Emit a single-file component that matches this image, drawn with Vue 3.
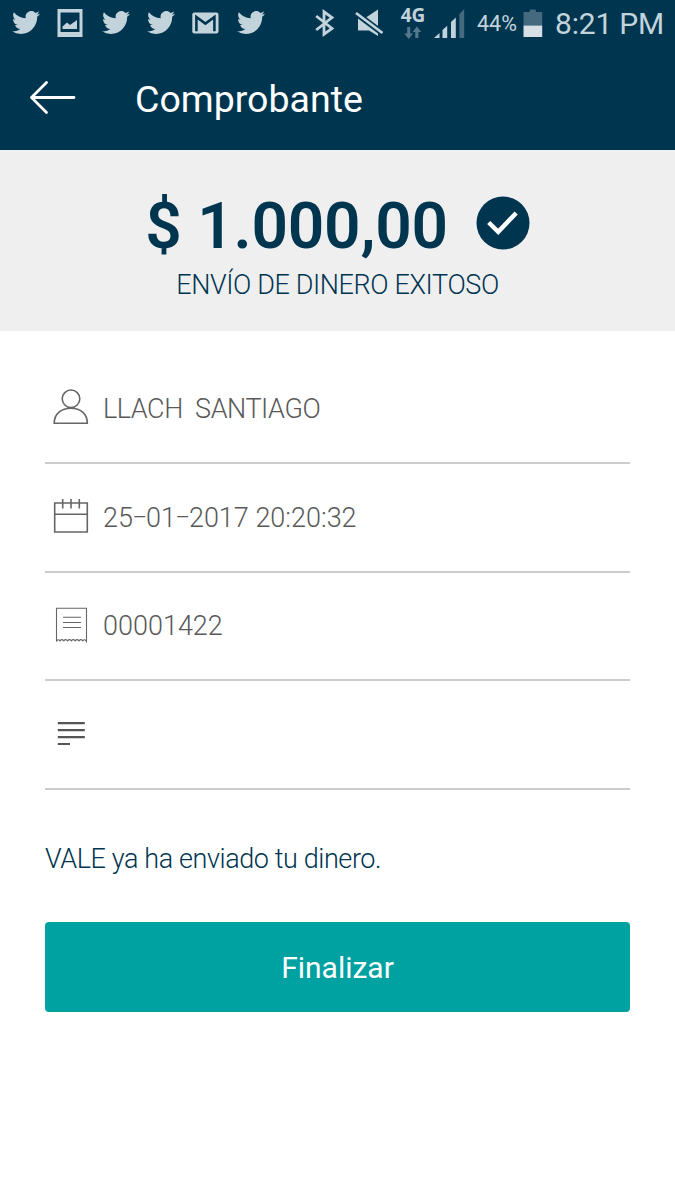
<script setup>
import { ref } from 'vue'

// Notification icons on the left of the status bar
const notifications = ['bird', 'picture', 'bird', 'bird', 'mail', 'bird']

// Receipt rows
const rows = [
  { id: 'person', parts: ['LLACH  SANTIAGO'] },
  { id: 'date', parts: ['25', '01', '2017 20:20:32'] },
  { id: 'receipt', parts: ['00001422'] },
  { id: 'note', parts: [] }
]

const finished = ref(false)

function finish() {
  finished.value = true
}
</script>

<template>
  <div class="page">
    <!-- Status bar -->
    <div class="status-bar">
      <div class="notifications">
        <div v-for="(name, i) in notifications" :key="i" class="notification">
          <svg v-if="name === 'bird'" width="28" height="23" viewBox="0 2.2 24 19.6" preserveAspectRatio="none">
            <path fill="currentColor" d="M23.953 4.57a10 10 0 01-2.825.775 4.958 4.958 0 002.163-2.723c-.951.555-2.005.959-3.127 1.184a4.92 4.92 0 00-8.384 4.482C7.69 8.095 4.067 6.13 1.64 3.162a4.822 4.822 0 00-.666 2.475c0 1.71.87 3.213 2.188 4.096a4.904 4.904 0 01-2.228-.616v.06a4.923 4.923 0 003.946 4.827 4.996 4.996 0 01-2.212.085 4.936 4.936 0 004.604 3.417 9.867 9.867 0 01-6.102 2.105c-.39 0-.779-.023-1.17-.067a13.995 13.995 0 007.557 2.209c9.053 0 13.998-7.496 13.998-13.985 0-.21 0-.42-.015-.63A9.935 9.935 0 0024 4.59z" />
          </svg>
          <svg v-else-if="name === 'picture'" class="picture" width="26" height="28" viewBox="0 0 26 28">
            <path fill="currentColor" fill-rule="evenodd" d="M0.5 0H25.5V28H0.5ZM3.5 3.5V23H22.5V3.5Z" />
            <path fill="currentColor" d="M5.5 20V17.5L10 13.5L13 16L20 11V20Z" />
          </svg>
          <svg v-else class="mail" width="27" height="22" viewBox="0 0 27 22">
            <rect x="0.3" y="0.5" width="26.2" height="21" rx="2" fill="currentColor" />
            <path class="mail-line" d="M4.4 19.2V5L13.4 11.6L22.4 5V19.2" />
          </svg>
        </div>
      </div>

      <div class="system">
        <svg class="bluetooth" width="20" height="28" viewBox="0 0 20 28">
          <path fill="none" stroke="currentColor" stroke-width="2.8" d="M1.2 7L17 19.5L9 25.2V2.8L17 8.5L1.2 21" />
        </svg>
        <svg class="mute" width="30" height="28" viewBox="0 0 30 28">
          <path fill="currentColor" d="M3 8.5H11L23 0.5V27L14 21.5H3Z" />
          <path class="mute-gap" d="M0 3.4L28.5 24.8" />
          <path fill="none" stroke="currentColor" stroke-width="2.8" d="M1 4L27.5 24" />
        </svg>
        <div class="network">
          <span class="network-name">4G</span>
          <svg width="18" height="14" viewBox="0 0 18 14">
            <path fill="currentColor" d="M3.2 1H6.2V7.5H9L4.7 13L0.3 7.5H3.2ZM11.3 12V6H8.5L12.9 0.5L17.3 6H14.4V12Z" />
          </svg>
        </div>
        <svg class="signal" width="32" height="31" viewBox="0 0 32 31">
          <path fill="currentColor" d="M0 30L5.5 25V30ZM8.5 22L13.2 17.8V30H8.5ZM17 14L21.8 9.5V30H17Z" />
          <path class="dim" d="M25.4 6L30.2 1V30H25.4Z" />
        </svg>
        <span class="percent">44%</span>
        <svg class="battery" width="20" height="29" viewBox="0 0 20 29">
          <path class="dim" d="M0.5 3H6.8V0.5H12.8V3H19.2V16.5H0.5Z" />
          <path class="charge" d="M0.5 16.5H19.2V28H0.5Z" />
        </svg>
        <span class="clock">8:21 PM</span>
      </div>
    </div>

    <!-- Header -->
    <header class="header">
      <svg class="back" width="48" height="36" viewBox="0 0 48 36">
        <path d="M17.5 3.5L2.5 18.5L17.5 33.5M2.5 18.5H45" />
      </svg>
      <h1 class="title">Comprobante</h1>
    </header>

    <!-- Amount -->
    <section class="summary">
      <div class="amount-line">
        <span class="amount">$ 1.000,00</span>
        <svg class="check" width="54" height="54" viewBox="0 0 54 54">
          <circle cx="27" cy="27" r="26.5" />
          <path d="M12.7 26.5L22.2 35.8L40.2 17" />
        </svg>
      </div>
      <div class="result">ENVÍO DE DINERO EXITOSO</div>
    </section>

    <!-- Details -->
    <main class="details">
      <div v-for="row in rows" :key="row.id" class="row">
        <svg v-if="row.id === 'person'" class="row-icon" width="36" height="36" viewBox="0 0 36 36">
          <circle cx="18" cy="9.8" r="8.8" />
          <path d="M1.2 34.2C1.2 24.5 8.5 19.2 18 19.2S34.3 24.5 34.3 34.2Z" />
        </svg>
        <svg v-else-if="row.id === 'date'" class="row-icon" width="36" height="36" viewBox="0 0 36 36">
          <path d="M1.7 5H34.3V34H1.7ZM1.7 16.3H34.3M9.7 1V10.5M18 1V10.5M26.3 1V10.5" />
        </svg>
        <svg v-else-if="row.id === 'receipt'" class="row-icon thin" width="36" height="36" viewBox="0 0 36 36">
          <path d="M3.5 34.5V1.3H33.5V34.5Q31.5 31.5 29.8 33.8Q27.8 31.5 26 33.8Q24 31.5 22.2 33.8Q20.2 31.5 18.4 33.8Q16.4 31.5 14.6 33.8Q12.6 31.5 10.8 33.8Q8.8 31.5 7 33.8Q5 31.5 3.5 34.5ZM10 10.2H28M10 15.5H28M10 20.5H28" />
        </svg>
        <svg v-else class="row-icon thick" width="36" height="36" viewBox="0 0 36 36">
          <path d="M4.8 7.2H31.8M4.8 14.2H31.8M4.8 21.2H31.8M4.8 28H17" />
        </svg>
        <span class="row-text" :class="row.id"><template v-for="(part, i) in row.parts" :key="i"><span v-if="i" class="dash">–</span>{{ part }}</template></span>
      </div>

      <p class="message">VALE ya ha enviado tu dinero.</p>
      <button class="finish" :disabled="finished" @click="finish">Finalizar</button>
    </main>
  </div>
</template>

<style>
body {
  margin: 0;
  background-color: #ffffff;
}
</style>

<style scoped>
.page {
  min-height: 100vh;
  background-color: #ffffff;
  font-family: Roboto, sans-serif;
  color: #003550;
}

svg {
  display: block;
  flex-shrink: 0;
}

/* Status bar */
.status-bar {
  display: flex;
  justify-content: space-between;
  height: 46px;
  padding: 0 11px 0 12px;
  box-sizing: border-box;
  background-color: #003550;
  color: #c3d3dc;
}

.notifications,
.system {
  display: flex;
  align-items: center;
}

.notifications {
  gap: 17px;
  height: 45px;
}

.notification {
  display: flex;
  justify-content: center;
  width: 28px;
}

.picture,
.mail {
  margin-right: 2px;
}

.mail-line {
  fill: none;
  stroke: #003550;
  stroke-width: 2.6;
}

.bluetooth {
  margin-right: 20px;
}

.mute {
  margin-right: 15px;
}

.mute-gap {
  fill: none;
  stroke: #003550;
  stroke-width: 6;
}

.network {
  display: flex;
  flex-direction: column;
  align-items: center;
  gap: 2px;
  width: 26px;
  margin-right: 8px;
  color: #55788b;
}

.network-name {
  font: 700 19px/17px "Open Sans", sans-serif;
  color: #c3d3dc;
}

.signal {
  margin-right: 11px;
}

.dim {
  fill: #45697e;
}

.percent {
  width: 41px;
  margin-right: 5px;
  font-size: 21.5px;
  white-space: nowrap;
}

.battery {
  margin-right: 12px;
}

.charge {
  fill: #d5dfe5;
}

.clock {
  width: 109px;
  font-size: 30px;
  letter-spacing: -0.2px;
  white-space: nowrap;
}

/* Header */
.header {
  display: flex;
  align-items: center;
  height: 104px;
  padding: 0 29px;
  box-sizing: border-box;
  background-color: #003550;
}

.back {
  margin: 0 58px 2px 0;
}

.back path {
  fill: none;
  stroke: #ffffff;
  stroke-width: 2.8;
  stroke-linecap: round;
  stroke-linejoin: round;
}

.title {
  margin: 0;
  padding-top: 1px;
  font-size: 37.5px;
  font-weight: 400;
  color: #ffffff;
}

/* Amount */
.summary {
  height: 181px;
  padding-top: 36px;
  box-sizing: border-box;
  background-color: #efefef;
  text-align: center;
}

.amount-line {
  display: flex;
  justify-content: center;
  align-items: center;
  gap: 28px;
  height: 76px;
}

.amount {
  padding-top: 5px;
  font-size: 64px;
  font-weight: 560;
  line-height: 76px;
  letter-spacing: -0.25px;
}

.check {
  margin-bottom: 2px;
}

.check circle {
  fill: #003550;
}

.check path {
  fill: none;
  stroke: #ffffff;
  stroke-width: 4.5;
}

.result {
  margin-top: 7px;
  font-size: 27px;
  font-weight: 300;
  line-height: 32px;
  letter-spacing: -0.38px;
}

/* Details */
.details {
  padding: 24px 45px 0;
}

.row {
  display: flex;
  align-items: center;
  gap: 14px;
  height: 108.8px;
  padding: 0 0 2px 8px;
  box-sizing: border-box;
  border-bottom: 2px solid #cccccc;
}

.row-icon {
  fill: none;
  stroke: #666666;
  stroke-width: 1.6;
}

.row-icon.thin {
  stroke-width: 1.1;
}

.row-icon.thick {
  stroke: #555555;
  stroke-width: 2.2;
}

.row-text {
  padding-top: 3px;
  font-size: 27px;
  font-weight: 300;
  color: #595959;
  white-space: pre;
}

.row-text.person {
  letter-spacing: -0.45px;
}

.dash {
  display: inline-block;
  margin: 0 -2.3px;
  transform: scaleX(0.82);
}

.message {
  margin: 53px 0 47px;
  font-size: 27px;
  font-weight: 300;
  line-height: 32px;
  letter-spacing: -0.4px;
}

.finish {
  display: block;
  width: 100%;
  height: 90px;
  padding: 0;
  border: none;
  border-radius: 4px;
  background-color: #00a1a1;
  font-family: inherit;
  font-size: 30px;
  color: #ffffff;
}
</style>
